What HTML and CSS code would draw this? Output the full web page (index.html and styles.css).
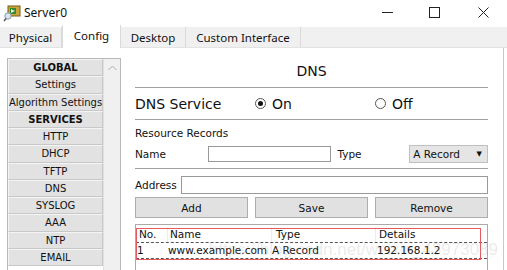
FILE: index.html
```html
<!DOCTYPE html>
<html lang="en">
<head>
    <meta charset="UTF-8">
    <title>Server0</title>
    <link rel="stylesheet" href="styles.css">
</head>
<body>
    <div class="window">
        <header class="titlebar">
            <svg class="app-icon" width="18" height="18" viewBox="0 0 18 18">
                <rect x="5" y="2" width="12" height="10" fill="#c9a63a" stroke="#7a5a1a" stroke-width="1"/>
                <rect x="7" y="4" width="6" height="6" fill="#2f8a2f"/>
                <path d="M8 5 L12 7 L8 9 Z" fill="#e8e8e8"/>
                <circle cx="5" cy="12" r="3.2" fill="#d8e4ee" stroke="#8a9aa8" stroke-width="1"/>
                <line x1="3" y1="14.5" x2="1" y2="17" stroke="#555" stroke-width="1.5"/>
            </svg>
            <span class="title">Server0</span>
            <div class="controls">
                <span class="ctl-min"></span>
                <span class="ctl-max"></span>
                <svg class="ctl-close" width="11" height="11" viewBox="0 0 11 11">
                    <path d="M0.5 0.5 L10.5 10.5 M10.5 0.5 L0.5 10.5" stroke="#222" stroke-width="1"/>
                </svg>
            </div>
        </header>

        <nav class="tabs">
            <span class="tab tab-physical">Physical</span>
            <span class="tab tab-config active">Config</span>
            <span class="tab tab-desktop">Desktop</span>
            <span class="tab tab-custom">Custom Interface</span>
        </nav>

        <main class="content">
            <aside class="sidebar">
                <ul class="menu">
                    <li class="menu-head">GLOBAL</li>
                    <li>Settings</li>
                    <li>Algorithm Settings</li>
                    <li class="menu-head">SERVICES</li>
                    <li>HTTP</li>
                    <li>DHCP</li>
                    <li>TFTP</li>
                    <li>DNS</li>
                    <li>SYSLOG</li>
                    <li>AAA</li>
                    <li>NTP</li>
                    <li>EMAIL</li>
                </ul>
                <div class="scrollbar">
                    <svg width="9" height="6" viewBox="0 0 9 6">
                        <path d="M0.5 5 L4.5 1 L8.5 5" fill="none" stroke="#b0b0b0" stroke-width="1"/>
                    </svg>
                </div>
            </aside>

            <section class="panel">
                <h2 class="panel-title">DNS</h2>

                <div class="service-row">
                    <span class="service-label">DNS Service</span>
                    <label class="radio"><span class="dot checked"></span>On</label>
                    <label class="radio"><span class="dot"></span>Off</label>
                </div>

                <div class="records">
                    <div class="records-title">Resource Records</div>
                    <div class="field-row">
                        <span class="field-label">Name</span>
                        <span class="input name-input"></span>
                        <span class="field-label type-label">Type</span>
                        <span class="select">A Record <span class="caret">&#9660;</span></span>
                    </div>
                </div>

                <div class="address-row">
                    <span class="field-label">Address</span>
                    <span class="input address-input"></span>
                </div>

                <div class="buttons">
                    <button>Add</button>
                    <button>Save</button>
                    <button>Remove</button>
                </div>

                <div class="table">
                    <div class="row head">
                        <span class="c-no">No.</span>
                        <span class="c-name">Name</span>
                        <span class="c-type">Type</span>
                        <span class="c-det">Details</span>
                    </div>
                    <div class="row data">
                        <span class="c-no">1</span>
                        <span class="c-name">www.example.com</span>
                        <span class="c-type">A Record</span>
                        <span class="c-det">192.168.1.2</span>
                    </div>
                    <div class="mark"></div>
                </div>
            </section>
        </main>
        <div class="watermark">https://blog.csdn.net/weixin_43973089</div>
    </div>
</body>
</html>
```

FILE: styles.css
```css
body {
    margin: 0;
    padding: 0;
    background-color: #fff;
    font-family: 'DejaVu Sans', Verdana, sans-serif;
    color: #111;
}

.window {
    position: relative;
    width: 507px;
    height: 270px;
    overflow: hidden;
}

.titlebar {
    height: 27px;
    display: flex;
    align-items: center;
    background-color: #fff;
}

.app-icon {
    margin-left: 3px;
    margin-top: -2px;
}

.title {
    margin-left: 3px;
    margin-top: -3px;
    font-family: 'Noto Sans', sans-serif;
    font-size: 12px;
}

.controls {
    margin-left: auto;
    display: flex;
    align-items: center;
    margin-top: -3px;
}

.ctl-min {
    width: 11px;
    border-top: 1px solid #222;
    margin-right: 36px;
}

.ctl-max {
    width: 9px;
    height: 9px;
    border: 1px solid #222;
    margin-right: 38px;
}

.ctl-close {
    margin-right: 18px;
}

.tabs {
    height: 20px;
    display: flex;
    background-color: #f0f0f0;
    border-bottom: 1px solid #e3e3e3;
    font-family: 'Noto Sans', sans-serif;
    font-size: 11.5px;
}

.tab {
    display: flex;
    align-items: center;
    justify-content: center;
    box-sizing: border-box;
    border-right: 1px solid #dadada;
}

.tab-physical { width: 62px; }
.tab-config { width: 59px; }
.tab-desktop { width: 65px; }
.tab-custom { width: 115px; }

.tab.active {
    background-color: #fff;
    margin-top: -2px;
    height: 23px;
    padding-bottom: 2px;
    border-left: 1px solid #dadada;
}

.content {
    display: flex;
    width: 503px;
    height: 222px;
    padding-top: 10px;
    border-right: 1px solid #c8c8c8;
}

.sidebar {
    display: flex;
    margin-left: 7px;
    width: 112px;
    height: 230px;
    border: 1px solid #b8b8b8;
    border-bottom: none;
}

.menu {
    list-style-type: none;
    margin: 0;
    padding: 0;
    width: 95px;
    overflow: hidden;
    font-size: 10px;
}

.menu li {
    height: 15.25px;
    border: 1px solid #f4f4f4;
    border-right-color: #c8c8c8;
    border-bottom-color: #c8c8c8;
    background-color: #e2e2e2;
    display: flex;
    align-items: center;
    justify-content: center;
    white-space: nowrap;
}

.menu li.menu-head {
    font-weight: bold;
}

.scrollbar {
    flex: 1;
    background-color: #f0f0f0;
    border-left: 1px solid #e0e0e0;
    display: flex;
    justify-content: center;
    padding-top: 6px;
}

.panel {
    margin-left: 14px;
    width: 353px;
}

.panel-title {
    margin: 0;
    height: 29px;
    line-height: 26px;
    text-align: center;
    font-size: 14px;
    font-weight: normal;
    border-bottom: 1px solid #a0a0a0;
}

.service-row {
    height: 31px;
    display: flex;
    align-items: center;
    border-bottom: 1px solid #a0a0a0;
    font-size: 14px;
}

.service-label {
    flex: 0 0 120px;
}

.radio {
    flex: 0 0 120px;
    display: flex;
    align-items: center;
    gap: 6px;
}

.dot {
    position: relative;
    width: 11px;
    height: 11px;
    border: 1px solid #555;
    border-radius: 50%;
    box-sizing: border-box;
}

.dot.checked::after {
    content: '';
    position: absolute;
    left: 2px;
    top: 2px;
    width: 5px;
    height: 5px;
    border-radius: 50%;
    background-color: #111;
}

.records {
    height: 48px;
    border-bottom: 1px solid #a0a0a0;
    font-size: 10.5px;
}

.records-title {
    height: 25px;
    line-height: 26px;
}

.field-row {
    display: flex;
    align-items: center;
    height: 18px;
}

.field-label {
    width: 73px;
}

.input {
    height: 16px;
    border: 1px solid #999;
    background-color: #fff;
    box-sizing: border-box;
}

.name-input {
    width: 124px;
}

.type-label {
    margin-left: 6px;
    width: 72px;
}

.select {
    width: 79px;
    height: 18px;
    box-sizing: border-box;
    border: 1px solid #c0c0c0;
    background-color: #e5e5e5;
    display: flex;
    align-items: center;
    padding-left: 3px;
}

.caret {
    margin-left: auto;
    margin-right: 5px;
    font-size: 7px;
}

.address-row {
    display: flex;
    align-items: center;
    height: 19px;
    margin-top: 6px;
    font-size: 10.5px;
}

.address-row .field-label {
    width: 46px;
}

.address-input {
    flex: 1;
    height: 18px;
}

.buttons {
    display: flex;
    gap: 7px;
    margin-top: 3px;
}

button {
    flex: 1;
    height: 21px;
    padding: 0;
    background-color: #e1e1e1;
    border: 1px solid #adadad;
    font-family: 'DejaVu Sans', sans-serif;
    font-size: 10.5px;
    color: #111;
}

.table {
    position: relative;
    height: 60px;
    margin-top: 6px;
    padding-top: 2px;
    border: 1px solid #aaa;
    border-bottom: none;
    font-size: 10.5px;
}

.row {
    display: grid;
    grid-template-columns: 31px 104px 104px 1fr;
    height: 15px;
    align-items: center;
    border-bottom: 1px dashed #555;
    white-space: nowrap;
}

.row span {
    height: 15px;
    line-height: 15px;
}

.row.head span + span {
    border-left: 1px solid #ececec;
}

.head .c-no { padding-left: 3px; }
.head .c-name { padding-left: 2px; }
.head .c-type { padding-left: 4px; }
.head .c-det { padding-left: 3px; }

.data .c-no { padding-left: 1px; }
.data .c-name { padding-left: 1px; }
.data .c-type { padding-left: 1px; }
.data .c-det { padding-left: 2px; }

.mark {
    position: absolute;
    left: 0;
    top: 3px;
    width: 343px;
    height: 30px;
    border: 1px solid #e45a5e;
}

.watermark {
    position: absolute;
    right: 9px;
    top: 240px;
    font-family: 'Liberation Sans', sans-serif;
    font-size: 17px;
    color: rgba(150, 150, 150, 0.2);
    white-space: nowrap;
}
```
